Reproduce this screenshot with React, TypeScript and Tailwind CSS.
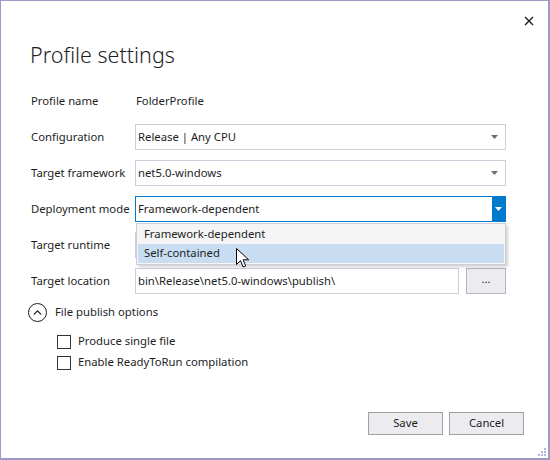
import { ChevronUp } from "lucide-react";

const font = { fontFamily: '"Segoe UI", "Noto Sans", sans-serif' };

function Caret({ white }: { white?: boolean }) {
  return (
    <svg width="7" height="4" viewBox="0 0 7 4">
      <path d="M0 0h7L3.5 4z" fill={white ? "#ffffff" : "#6d6d6d"} />
    </svg>
  );
}

function Combo({ value, active }: { value: string; active?: boolean }) {
  return (
    <div
      className={`flex h-[26px] items-stretch border ${active ? "border-[#007acc]" : "border-[#cccedb]"} bg-white`}
    >
      <span className="flex flex-1 items-center whitespace-nowrap pl-[2px] text-[#1e1e1e]">{value}</span>
      <span className={`flex w-[13px] items-center justify-center ${active ? "bg-[#007acc]" : ""}`}>
        <Caret white={active} />
      </span>
      {!active && <span className="w-[4px]" />}
    </div>
  );
}

function Check({ label }: { label: string }) {
  return (
    <label className="flex h-[21px] items-center gap-[7px] text-[11.3px] text-[#1e1e1e]">
      <span className="h-[14px] w-[14px] border border-[#333337] bg-white" />
      {label}
    </label>
  );
}

export default function App() {
  return (
    <div
      className="relative h-[460px] w-[550px] overflow-hidden border border-r-[2px] border-b-[2px] border-[#9b9bc5] bg-white"
      style={font}
    >
      <div className="flex justify-end pr-[13px] pt-[13px]">
        <svg width="12" height="12" viewBox="0 0 12 12" className="mt-[1px]">
          <path d="M2 2l8 8M10 2l-8 8" stroke="#1e1e1e" strokeWidth="1.4" />
        </svg>
      </div>

      <h1
        className="mt-[12px] pl-[29px] text-[21.5px] font-light leading-[32px] text-[#1e1e1e]"
        style={{ fontFamily: '"Segoe UI Light", "Noto Sans", sans-serif' }}
      >
        Profile settings
      </h1>

      <div className="mt-[17px] grid grid-cols-[104px_371px] gap-y-[10px] pl-[30px] text-[11.3px] text-[#1e1e1e]">
        <span className="flex h-[26px] items-center whitespace-nowrap">Profile name</span>
        <span className="flex h-[26px] items-center pl-[1px]">FolderProfile</span>

        <span className="flex h-[26px] items-center whitespace-nowrap">Configuration</span>
        <Combo value="Release | Any CPU" />

        <span className="flex h-[26px] items-center whitespace-nowrap">Target framework</span>
        <Combo value="net5.0-windows" />

        <span className="flex h-[26px] items-center whitespace-nowrap">Deployment mode</span>
        <div className="relative">
          <Combo value="Framework-dependent" active />
          <div className="absolute left-[1px] top-[27px] z-10 w-[370px] border border-[#cccedb] bg-[#f5f5f5] p-[1px] shadow-[2px_2px_3px_rgba(0,0,0,0.18)]">
            <div className="flex h-[19px] items-center pl-[6px]">Framework-dependent</div>
            <div className="flex h-[19px] items-center bg-[#c9ddf2] pl-[6px]">Self-contained</div>
          </div>
          <svg
            className="absolute left-[101px] top-[52px] z-20"
            width="13"
            height="21"
            viewBox="0 0 13 21"
          >
            <path
              d="M0.5 0.5v16l4-3.8 2.6 6.3 2.6-1.1-2.6-6.1h5.6z"
              fill="#ffffff"
              stroke="#000000"
              strokeWidth="1"
              strokeLinejoin="round"
            />
          </svg>
        </div>

        <span className="flex h-[26px] items-center whitespace-nowrap">Target runtime</span>
        <Combo value="" />

        <span className="flex h-[26px] items-center whitespace-nowrap">Target location</span>
        <div className="flex gap-[7px]">
          <div className="flex h-[26px] w-[324px] items-center border border-[#cccedb] bg-white pl-[2px]">
            bin\Release\net5.0-windows\publish\
          </div>
          <button className="h-[26px] w-[40px] border border-[#b4b4bc] bg-[#ececf0] pb-[3px] text-[#1e1e1e]">
            ...
          </button>
        </div>
      </div>

      <div className="mt-[8px] flex items-center gap-[8px] pl-[27px] text-[11.3px] text-[#1e1e1e]">
        <span className="flex h-[19px] w-[19px] items-center justify-center rounded-full border-[1.5px] border-[#1e1e1e]">
          <ChevronUp size={13} strokeWidth={2.5} />
        </span>
        <span className="leading-[20px]">File publish options</span>
      </div>

      <div className="mt-[9px] flex flex-col pl-[56px]">
        <Check label="Produce single file" />
        <Check label="Enable ReadyToRun compilation" />
      </div>

      <div className="mt-[39px] flex justify-end gap-[6px] pr-[24px]">
        <button className="h-[23px] w-[75px] border border-[#a0a0a0] bg-[#ececf0] text-[11.3px] text-[#1e1e1e]">
          Save
        </button>
        <button className="h-[23px] w-[75px] border border-[#a0a0a0] bg-[#ececf0] text-[11.3px] text-[#1e1e1e]">
          Cancel
        </button>
      </div>

      <svg className="absolute bottom-[2px] right-[2px]" width="10" height="10" viewBox="0 0 10 10">
        {[
          [8, 0],
          [5, 3],
          [8, 3],
          [2, 6],
          [5, 6],
          [8, 6],
        ].map(([x, y], i) => (
          <rect key={i} x={x} y={y + 2} width="2" height="2" fill="#b4b4d8" />
        ))}
      </svg>
    </div>
  );
}
